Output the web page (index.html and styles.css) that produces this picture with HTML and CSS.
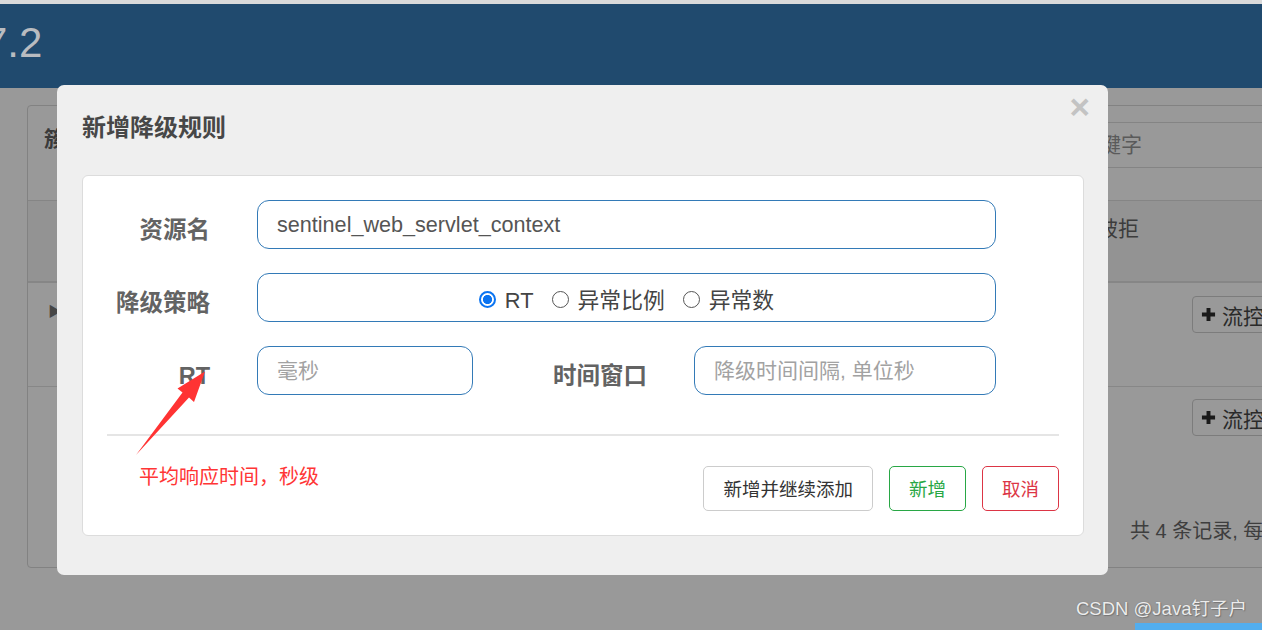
FILE: index.html
```html
<!DOCTYPE html>
<html lang="zh-CN">
<head>
<meta charset="utf-8">
<title>新增降级规则</title>
<link rel="stylesheet" href="styles.css">
</head>
<body>
  <div class="topstrip"></div>
  <header class="navbar"><span class="brand">7.2</span></header>

  <main class="page">
    <section class="panel">
      <div class="panel-head">
        <span class="panel-title">簇</span>
        <div class="search">关键字</div>
      </div>
      <div class="thead"><span class="th-cell">被拒</span></div>
      <div class="trow trow-first">
        <span class="caret">▶</span>
        <span class="btn-flow"><svg class="plus" viewBox="0 0 16 16" width="15" height="15"><path d="M8 1v14M1 8h14" stroke="#1a1a1a" stroke-width="4.2"/></svg>流控</span>
      </div>
      <div class="trow">
        <span class="caret caret-empty"></span>
        <span class="btn-flow"><svg class="plus" viewBox="0 0 16 16" width="15" height="15"><path d="M8 1v14M1 8h14" stroke="#1a1a1a" stroke-width="4.2"/></svg>流控</span>
      </div>
      <div class="pager">共 4 条记录, 每页</div>
    </section>
  </main>

  <div class="modal">
    <span class="close">×</span>
    <h4 class="modal-title">新增降级规则</h4>
    <div class="card">
      <div class="form-row">
        <label class="label">资源名</label>
        <div class="input input-wide value">sentinel_web_servlet_context</div>
      </div>
      <div class="form-row">
        <label class="label">降级策略</label>
        <div class="input input-wide radios">
          <span class="radio"><span class="dot checked"></span>RT</span>
          <span class="radio"><span class="dot"></span>异常比例</span>
          <span class="radio"><span class="dot"></span>异常数</span>
        </div>
      </div>
      <div class="form-row">
        <label class="label">RT</label>
        <div class="input input-short placeholder">毫秒</div>
        <label class="label label-wide">时间窗口</label>
        <div class="input input-mid placeholder">降级时间间隔, 单位秒</div>
      </div>
      <div class="divider"></div>
      <div class="actions">
        <span class="btn btn-default">新增并继续添加</span>
        <span class="btn btn-green">新增</span>
        <span class="btn btn-red">取消</span>
      </div>
    </div>
  </div>

  <div class="annotation">
    <svg class="arrow" width="1262" height="630" viewBox="0 0 1262 630">
      <polygon points="136,455 182.5,392.5 177.5,388.5 205,371.5 194,402 189,397.5" fill="#ff3333"/>
    </svg>
    <span class="note">平均响应时间，秒级</span>
  </div>

  <div class="watermark">CSDN @Java钉子户</div>
  <div class="bluebar"></div>
</body>
</html>
```

FILE: styles.css
```css
html, body {
  margin: 0;
  padding: 0;
  width: 1262px;
  height: 630px;
  overflow: hidden;
}

body {
  position: relative;
  background: #999999;
  font-family: "Liberation Sans", "Noto Sans CJK SC", sans-serif;
  color: #333;
}

.topstrip {
  height: 4px;
  background: #dadada;
}

.navbar {
  height: 84px;
  background: #204a6e;
  box-sizing: border-box;
  padding-top: 15px;
}

.brand {
  display: block;
  margin-left: -16px;
  font-size: 42px;
  line-height: 48px;
  color: #b9bcc0;
}

/* background page (dimmed) */
.page {
  padding: 17px 0 0 27px;
}

.panel {
  width: 1270px;
  height: 463px;
  box-sizing: border-box;
  border: 1px solid #828282;
  border-radius: 4px;
  display: flex;
  flex-direction: column;
}

.panel-head {
  height: 94px;
  display: flex;
  align-items: flex-start;
  padding-left: 16px;
}

.panel-title {
  margin-top: 18px;
  font-size: 21px;
  line-height: 30px;
  font-weight: bold;
  color: #3a3a3a;
}

.search {
  margin-left: auto;
  margin-top: 16px;
  width: 234px;
  height: 46px;
  box-sizing: border-box;
  border: 1px solid #848484;
  border-right: none;
  padding-left: 16px;
  font-size: 21px;
  line-height: 44px;
  color: #5a5a5a;
}

.thead {
  height: 83px;
  box-sizing: border-box;
  border-top: 1px solid #858585;
  border-bottom: 2px solid #868686;
  background: #939393;
  padding: 13px 0 0 1069px;
}

.th-cell {
  font-size: 21px;
  line-height: 30px;
  color: #3c3c3c;
}

.trow {
  display: flex;
  align-items: flex-start;
  justify-content: space-between;
  padding: 12px 14px 0 20px;
}

.trow-first {
  height: 104px;
  box-sizing: border-box;
  padding-top: 13px;
  border-bottom: 1px solid #878787;
}

.caret {
  margin-top: 7px;
  font-size: 14px;
  line-height: 16px;
  color: #464646;
}

.caret-empty {
  width: 10px;
}

.btn-flow {
  width: 90px;
  height: 37px;
  box-sizing: border-box;
  border: 1px solid #7c7c7c;
  border-radius: 4px;
  display: flex;
  align-items: center;
  gap: 6px;
  padding-left: 8px;
  font-size: 21px;
  color: #2a2a2a;
}

.plus {
  display: block;
}

.pager {
  margin-top: auto;
  padding: 0 0 20px 1102px;
  font-size: 20px;
  line-height: 32px;
  color: #3e3e3e;
  white-space: nowrap;
}

/* modal */
.modal {
  position: absolute;
  left: 57px;
  top: 85px;
  width: 1051px;
  height: 490px;
  box-sizing: border-box;
  background: #efefef;
  border-radius: 7px;
  padding: 0 24px 0 25px;
}

.close {
  position: absolute;
  top: 4px;
  right: 18px;
  font-size: 35px;
  line-height: 35px;
  font-weight: bold;
  color: #c3c3c3;
}

.modal-title {
  margin: 0;
  padding-top: 26px;
  font-size: 24px;
  line-height: 30px;
  font-weight: bold;
  color: #474747;
  font-family: "Noto Sans CJK SC", sans-serif;
}

.card {
  margin-top: 34px;
  background: #ffffff;
  border: 1px solid #dcdcdc;
  border-radius: 6px;
  padding: 24px;
}

.form-row {
  display: flex;
  align-items: center;
  height: 49px;
  margin-bottom: 24px;
}

.form-row:nth-child(3) {
  margin-bottom: 0;
}

.label {
  width: 103px;
  flex: none;
  box-sizing: border-box;
  padding-top: 10px;
  margin-right: 47px;
  text-align: right;
  font-size: 23.5px;
  line-height: 30px;
  font-weight: bold;
  color: #636363;
}

.label-wide {
  width: 174px;
}

.input {
  height: 49px;
  box-sizing: border-box;
  border: 1px solid #337ab7;
  border-radius: 12px;
  padding-left: 19px;
  font-size: 21px;
  line-height: 47px;
  color: #555;
  flex: none;
  white-space: nowrap;
}

.input-wide { width: 739px; }
.input-short { width: 216px; }
.input-mid { width: 302px; }

.value {
  font-size: 21.6px;
  color: #555;
}

.placeholder {
  color: #a2a2a2;
}

.radios {
  display: flex;
  justify-content: center;
  align-items: center;
  gap: 18px;
  padding: 6px 0 0 0;
  color: #444;
  font-size: 21.8px;
}

.radio {
  display: inline-flex;
  align-items: center;
  gap: 9px;
  line-height: 30px;
}

.dot {
  width: 17px;
  height: 17px;
  box-sizing: border-box;
  border-radius: 50%;
  border: 1px solid #555;
  background: #fff;
  margin-top: -3px;
}

.dot.checked {
  border: 2px solid #0b74f1;
  background: radial-gradient(circle, #0b74f1 0 4.3px, #ffffff 4.8px 100%);
}

.divider {
  margin-top: 39px;
  height: 2px;
  background: #e5e5e5;
}

.actions {
  margin-top: 30px;
  display: flex;
  justify-content: flex-end;
  gap: 16px;
}

.btn {
  height: 45px;
  box-sizing: border-box;
  padding: 0 19px;
  border-radius: 5px;
  border: 1px solid #cccccc;
  font-size: 18.5px;
  line-height: 43px;
  color: #333;
  font-family: "Noto Sans CJK SC", sans-serif;
  background: #fff;
}

.btn-green {
  border-color: #28a745;
  color: #28a745;
}

.btn-red {
  border-color: #dc3545;
  color: #dc3545;
}

/* annotation layer */
.annotation {
  position: absolute;
  left: 0;
  top: 0;
  width: 1262px;
  height: 630px;
  pointer-events: none;
}

.arrow {
  position: absolute;
  left: 0;
  top: 0;
}

.note {
  position: absolute;
  left: 139px;
  top: 463px;
  font-size: 20px;
  line-height: 26px;
  color: #ff3535;
  font-family: "Noto Sans CJK SC", sans-serif;
}

.watermark {
  position: absolute;
  left: 1076px;
  top: 597px;
  font-size: 18.5px;
  line-height: 24px;
  color: #ececec;
  text-shadow: 0 0 1px #6a6a6a, 1px 1px 1px #777;
  white-space: nowrap;
}

.bluebar {
  position: absolute;
  left: 1135px;
  top: 623px;
  width: 127px;
  height: 7px;
  background: #52aeef;
}
```
